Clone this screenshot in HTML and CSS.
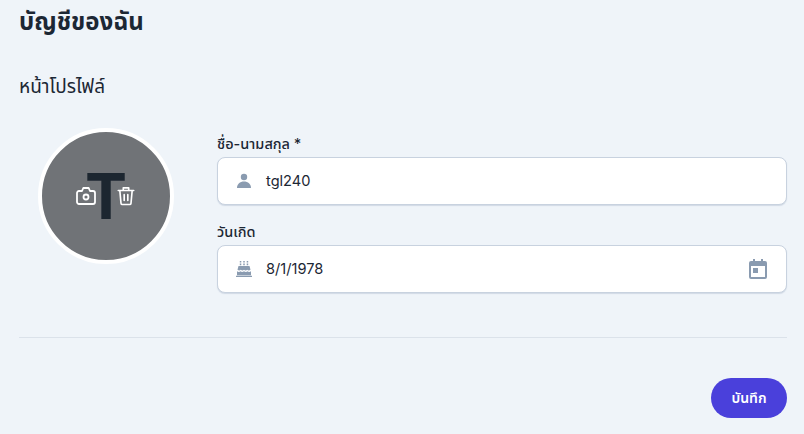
FILE: index.html
```html
<!DOCTYPE html>
<html lang="th">
<head>
    <meta charset="UTF-8">
    <meta name="viewport" content="width=device-width, initial-scale=1.0">
    <title>บัญชีของฉัน</title>
    <link rel="stylesheet" href="styles.css">
</head>
<body>
    <div class="page">
        <h1 class="page-title">บัญชีของฉัน</h1>
        <h2 class="section-title">หน้าโปรไฟล์</h2>

        <div class="profile-row">
            <div class="avatar-col">
                <div class="avatar">
                    <span class="avatar-letter">T</span>
                    <div class="avatar-actions">
                        <svg class="avatar-icon" viewBox="0 0 20 20" fill="none" stroke="#fff" stroke-width="1.8" stroke-linejoin="round">
                            <path d="M3 5h3l1.300-3h5.400L14 5h3a2 2 0 0 1 2 2v9a2 2 0 0 1-2 2H3a2 2 0 0 1-2-2V7a2 2 0 0 1 2-2z"/>
                            <circle cx="10" cy="11" r="2.500"/>
                        </svg>
                        <svg class="avatar-icon" viewBox="0 0 20 22" fill="none" stroke="#fff" stroke-width="1.800" stroke-linecap="round" stroke-linejoin="round">
                            <path d="M1.500 5h17M7 5V2h6v3M3.200 5l1.300 14a1.500 1.500 0 0 0 1.500 1.300h8a1.500 1.500 0 0 0 1.500-1.300L16.800 5M8 9.500v6.500M12 9.500v6.500"/>
                        </svg>
                    </div>
                </div>
            </div>

            <div class="fields">
                <div class="field">
                    <label class="field-label">ชื่อ-นามสกุล *</label>
                    <div class="input-box">
                        <svg class="input-icon" viewBox="0 0 16 16" fill="#8a9bb0">
                            <circle cx="8" cy="4" r="3.200"/>
                            <path d="M1 15c0-4 3-6.500 7-6.500s7 2.500 7 6.500z"/>
                        </svg>
                        <span class="input-value">tgl240</span>
                    </div>
                </div>
                <div class="field">
                    <label class="field-label">วันเกิด</label>
                    <div class="input-box">
                        <svg class="input-icon" viewBox="0 0 16 16" fill="#8a9bb0">
                            <path d="M3.800 0h1.500v1.600H3.800zM7.250 0h1.500v1.600h-1.500zM10.700 0h1.500v1.600h-1.500zM3.800 2.500h1.500v1.800H3.800zM7.250 2.500h1.500v1.800h-1.500zM10.700 2.500h1.500v1.800h-1.500z"/>
                            <path d="M2.500 5h11l1 3.800c-1.200 1-2.300 1-3.300 0-1 1-2.200 1-3.200 0-1 1-2.200 1-3.200 0-1 1-2.100 1-3.300 0z"/>
                            <path d="M1 10.300c1.300.8 2.500.8 3.500 0 1 .8 2.200.8 3.500 0 1.300.8 2.500.8 3.500 0 1 .8 2.200.8 3.500 0V14.200H1zM0 14.700h16V16H0z"/>
                        </svg>
                        <span class="input-value">8/1/1978</span>
                        <svg class="calendar-icon" viewBox="0 0 18 20" fill="#8a9bb0">
                            <path fill-rule="evenodd" d="M4 0h2v2h6V0h2v2h2a2 2 0 0 1 2 2v14a2 2 0 0 1-2 2H2a2 2 0 0 1-2-2V4a2 2 0 0 1 2-2h2zM2 7v11h14V7z"/>
                            <path d="M4 9h5v5H4z"/>
                        </svg>
                    </div>
                </div>
            </div>
        </div>

        <hr class="divider">

        <div class="actions">
            <button class="btn-save">บันทึก</button>
        </div>
    </div>
</body>
</html>
```

FILE: styles.css
```css
* {
    box-sizing: border-box;
    margin: 0;
    padding: 0;
}
body {
    font-family: 'Inter', 'Noto Sans', 'Noto Sans Thai', 'DejaVu Sans', sans-serif;
    background-color: #EFF4F9;
    color: #1C2734;
    height: 434px;
    overflow: hidden;
}
.page {
    padding: 8px 17px 0 19px;
}
.page-title {
    font-size: 24px;
    line-height: 28px;
    font-weight: 700;
}
.section-title {
    font-size: 19px;
    line-height: 24px;
    font-weight: 400;
    margin-top: 39px;
}
.profile-row {
    display: flex;
    gap: 24px;
    margin-top: 29px;
}
.avatar-col {
    width: 174px;
    display: flex;
    justify-content: center;
}
.avatar {
    position: relative;
    width: 136px;
    height: 136px;
    border-radius: 50%;
    border: 4px solid #FFFFFF;
    background-color: #707377;
    display: flex;
    align-items: center;
    justify-content: center;
}
.avatar-letter {
    font-size: 63px;
    line-height: 1;
    font-weight: 700;
    color: #1C2630;
}
.avatar-actions {
    position: absolute;
    inset: 0;
    display: flex;
    align-items: center;
    justify-content: center;
    gap: 20px;
}
.avatar-icon {
    width: 20px;
    height: 20px;
}
.fields {
    flex: 1;
    display: flex;
    flex-direction: column;
    gap: 17px;
    padding-top: 6px;
}
.field-label {
    display: block;
    font-size: 14.5px;
    line-height: 20px;
    font-weight: 500;
    margin-bottom: 3px;
}
.input-box {
    height: 48px;
    background-color: #FFFFFF;
    border: 1px solid #C8D2DF;
    border-radius: 8px;
    box-shadow: 0 1px 1px rgba(120, 140, 170, 0.25);
    display: flex;
    align-items: center;
    padding: 0 18px;
}
.input-icon {
    width: 16px;
    height: 16px;
}
.input-value {
    font-size: 14.6px;
    margin-left: 14px;
    flex: 1;
}
.calendar-icon {
    width: 18px;
    height: 20px;
    margin-right: 1px;
}
.divider {
    border: none;
    border-top: 1px solid #DBE2EA;
    margin-top: 44px;
}
.actions {
    display: flex;
    justify-content: flex-end;
    margin-top: 40px;
}
.btn-save {
    width: 76px;
    height: 40px;
    border: none;
    border-radius: 20px;
    background-color: #4A40DB;
    color: #FFFFFF;
    font-family: inherit;
    font-size: 14px;
    font-weight: 600;
}
```
